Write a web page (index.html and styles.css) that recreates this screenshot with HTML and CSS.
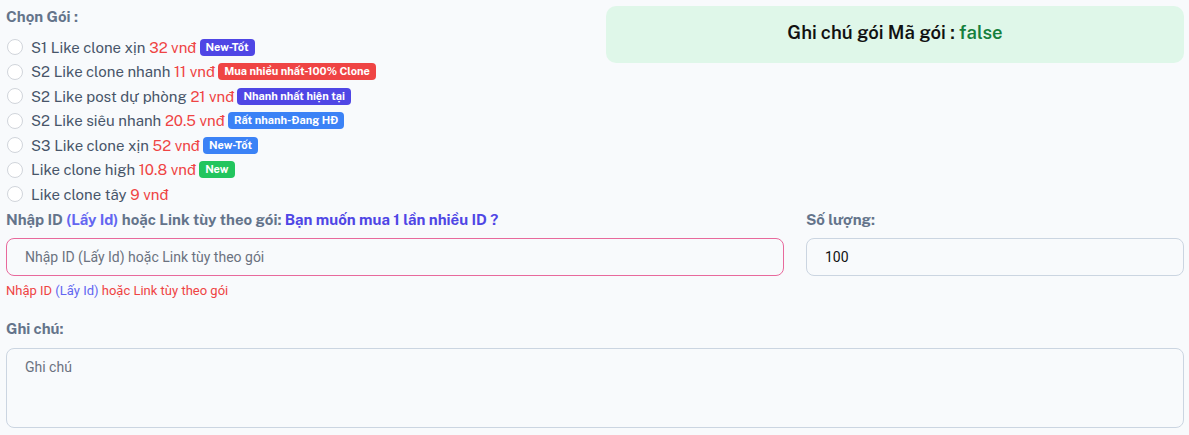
FILE: index.html
```html
<!DOCTYPE html>
<html lang="vi">
<head>
    <meta charset="UTF-8">
    <title>Chọn Gói</title>
    <link rel="stylesheet" href="styles.css">
</head>
<body>

<div class="page">
    <div class="top">
        <div class="packs">
            <div class="label">Chọn Gói :</div>
            <ul class="pack-list">
                <li><span class="radio"></span>S1 Like clone xịn <span class="price">32 vnđ</span> <span class="badge indigo">New-Tốt</span></li>
                <li><span class="radio"></span>S2 Like clone nhanh <span class="price">11 vnđ</span> <span class="badge red">Mua nhiều nhất-100% Clone</span></li>
                <li><span class="radio"></span>S2 Like post dự phòng <span class="price">21 vnđ</span> <span class="badge indigo">Nhanh nhất hiện tại</span></li>
                <li><span class="radio"></span>S2 Like siêu nhanh <span class="price">20.5 vnđ</span> <span class="badge blue">Rất nhanh-Đang HĐ</span></li>
                <li><span class="radio"></span>S3 Like clone xịn <span class="price">52 vnđ</span> <span class="badge blue">New-Tốt</span></li>
                <li><span class="radio"></span>Like clone high <span class="price">10.8 vnđ</span> <span class="badge green">New</span></li>
                <li><span class="radio"></span>Like clone tây <span class="price">9 vnđ</span></li>
            </ul>
        </div>
        <div class="note-box">
            Ghi chú gói Mã gói : <span class="ok">false</span>
        </div>
    </div>

    <div class="fields">
        <div class="field">
            <div class="label">Nhập ID <span class="light">(Lấy Id)</span> hoặc Link tùy theo gói: <span class="link">Bạn muốn mua 1 lần nhiều ID ?</span></div>
            <input class="input error" type="text" placeholder="Nhập ID (Lấy Id) hoặc Link tùy theo gói">
            <div class="hint">Nhập ID <span class="light">(Lấy Id)</span> hoặc Link tùy theo gói</div>
        </div>
        <div class="field">
            <div class="label">Số lượng:</div>
            <input class="input" type="text" value="100">
        </div>
    </div>

    <div class="field">
        <div class="label">Ghi chú:</div>
        <textarea class="input area" placeholder="Ghi chú"></textarea>
    </div>
</div>

</body>
</html>
```

FILE: styles.css
```css
*{
    margin: 0px;
    padding: 0px;
    box-sizing: border-box;
}
body{
    background-color: #f8fafc;
    font-family: "Public Sans", Inter, "Noto Sans", sans-serif;
    color: #475569;
}
ul{
    list-style: none;
}
.page{
    padding: 6px 5px 6px 6px;
}
.top{
    display: grid;
    grid-template-columns: 1fr 1fr;
    column-gap: 22px;
}
.label{
    font-size: 15px;
    font-weight: 700;
    color: #64748b;
    line-height: 20px;
}
.packs .label{
    margin-top: 1px;
    margin-bottom: 8px;
}
.pack-list li{
    display: flex;
    align-items: center;
    height: 24.5px;
    font-size: 15px;
    white-space: pre;
}
.radio{
    display: inline-block;
    width: 16px;
    height: 16px;
    border: 1px solid #d1d5db;
    border-radius: 50%;
    background-color: #fff;
    margin: 0 8px 0 1px;
}
.price{
    color: #ef4444;
}
.badge{
    display: inline-block;
    font-size: 11px;
    font-weight: 700;
    color: #fff;
    line-height: 17px;
    padding: 0 6px;
    border-radius: 4px;
    margin-left: 3px;
}
.badge.indigo{ background-color: #4f46e5; }
.badge.red{ background-color: #ef4444; }
.badge.blue{ background-color: #3b82f6; }
.badge.green{ background-color: #22c55e; }

.note-box{
    height: 57px;
    background-color: #dff7e9;
    border-radius: 10px;
    text-align: center;
    line-height: 52px;
    font-size: 18.5px;
    font-weight: 600;
    color: #111;
}
.note-box .ok{
    color: #15803d;
}

.fields{
    display: grid;
    grid-template-columns: 778px 1fr;
    column-gap: 22px;
    margin-top: 3px;
}
.field .label{
    margin-bottom: 8px;
}
.light{
    color: #6366f1;
}
.link{
    color: #4f46e5;
}
.input{
    display: block;
    width: 100%;
    height: 38px;
    border: 1px solid #cbd5e1;
    border-radius: 8px;
    background-color: #f8fafc;
    padding: 0 18px;
    font-family: Roboto, "Noto Sans", sans-serif;
    font-size: 14px;
    color: #111;
    outline: none;
}
.input::placeholder{
    color: #6b7280;
}
.input.error{
    border-color: #e8699c;
}
.hint{
    font-family: Roboto, "Noto Sans", sans-serif;
    font-size: 13px;
    color: #ef4444;
    margin-top: 6px;
    line-height: 18px;
}
.area{
    height: 80px;
    margin-top: 9px;
    padding: 10px 18px;
    resize: none;
}
.page > .field{
    margin-top: 19px;
}
```
